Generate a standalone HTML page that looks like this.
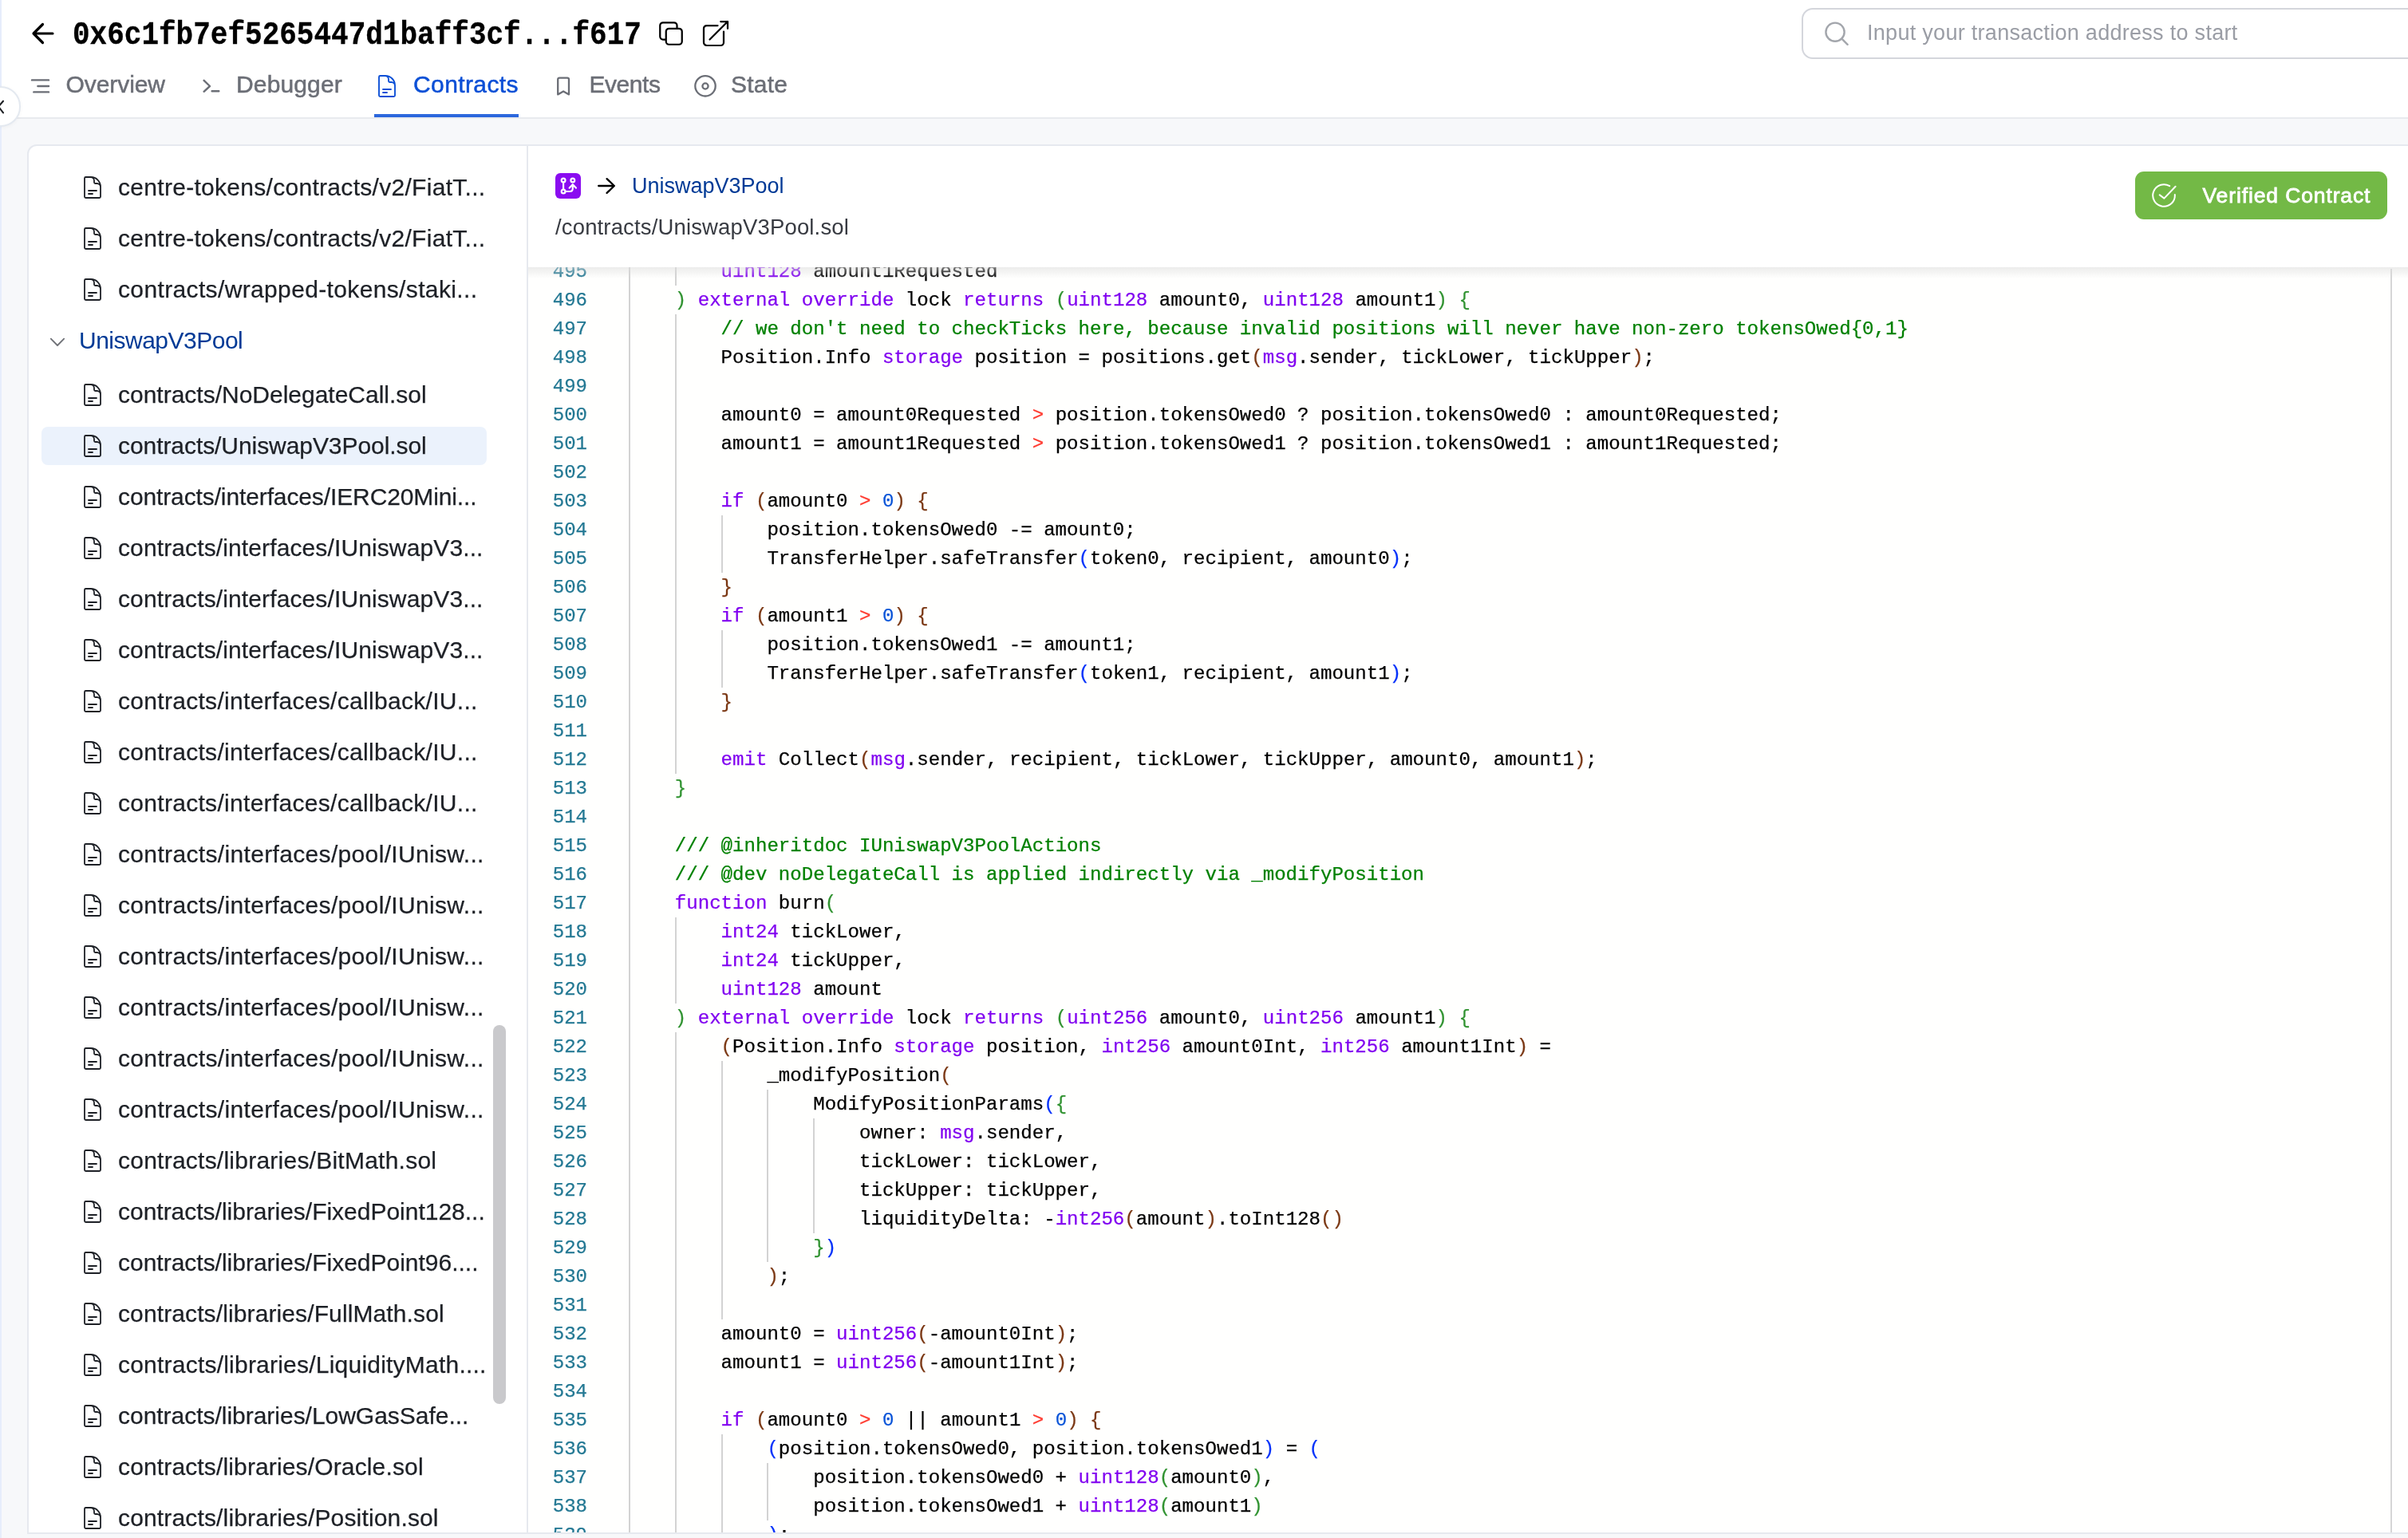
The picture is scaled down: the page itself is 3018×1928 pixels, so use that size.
<!DOCTYPE html>
<html><head><meta charset="utf-8">
<style>
*{box-sizing:border-box;margin:0;padding:0}
html,body{width:3018px;height:1928px;overflow:hidden;background:#f7f8fa;font-family:"Liberation Sans",sans-serif}
svg{position:absolute;overflow:visible}
#hdr{position:absolute;left:0;top:0;width:3018px;height:149px;background:#fff;border-bottom:2px solid #e8eaee}
#lstrip{position:absolute;left:0;top:0;width:2px;height:1928px;background:#e6edfb;z-index:5}
#title{position:absolute;left:91px;top:15.5px;font-family:"Liberation Mono",monospace;font-weight:bold;font-size:36px;line-height:60px;color:#000;white-space:nowrap;transform:scaleY(1.15);transform-origin:0 39.6px;-webkit-text-stroke:0.3px #000}
.tab{position:absolute;top:88px;font-size:30px;line-height:36px;color:#6b6e76;white-space:nowrap;-webkit-text-stroke:0.5px currentColor}
.tab.act{color:#0b4fd6}
#uline{position:absolute;left:469px;top:143px;width:181px;height:4px;background:#2b67dc}
#search{position:absolute;left:2258px;top:10px;width:900px;height:64px;border:2px solid #d4d6dc;border-radius:14px;background:#fff}
#stext{position:absolute;left:2340px;top:23px;font-size:27px;letter-spacing:0.29px;line-height:36px;color:#9a9da5;white-space:nowrap}
#colbtn{position:absolute;left:-24.5px;top:108px;width:50.5px;height:50.5px;border-radius:50%;background:#fff;border:2px solid #e4e9f0;box-shadow:0 1px 5px rgba(0,0,0,0.04);z-index:6}
#card{position:absolute;left:34px;top:181px;width:2994px;height:1742px;background:#fff;border:2px solid #e6e9ef;border-radius:12px 12px 0 0}
#divider{position:absolute;left:660px;top:183px;width:2px;height:1738px;background:#e6e9ef}
.ficon{left:100.3px}
.fi{position:absolute;left:148px;font-size:30px;line-height:40px;color:#1d2026;white-space:nowrap;-webkit-text-stroke:0.25px #1d2026}
#sel{position:absolute;left:52px;top:535px;width:558px;height:48px;background:#ebf2fc;border-radius:8px}
#sbar{position:absolute;left:618px;top:1285px;width:16px;height:475px;background:#c9c9cc;border-radius:8px}
#chead{position:absolute;left:662px;top:183px;width:2400px;height:152px;background:#fff}
#ed{will-change:transform;position:absolute;left:662px;top:335px;width:2357px;height:1586px;background:#fffffe;overflow:hidden}
#shadow{position:absolute;left:662px;top:335px;width:2357px;height:14px;background:linear-gradient(#dcdcdc,rgba(220,220,220,0));z-index:3;opacity:.55}
#ruler{position:absolute;left:2996px;top:337px;width:2px;height:1584px;background:#d6d6d6}
.ln{position:absolute;left:0;width:74px;text-align:right;font-family:"Liberation Mono",monospace;font-size:24px;line-height:36px;color:#237893;-webkit-text-stroke:0.25px #237893}
.cl{position:absolute;left:126px;font-family:"Liberation Mono",monospace;font-size:24.08px;line-height:36px;color:#000;white-space:pre;-webkit-text-stroke:0.25px currentColor}
.g{position:absolute;width:2px;background:#d3d3d3}
.k{color:#8000f0}.c{color:#008000}.o{color:#ff3b30}.n{color:#0b55d8}
.b1{color:#0431fa}.b2{color:#319331}.b3{color:#7b3814}
#folder{position:absolute;left:99px;top:407px;font-size:30px;line-height:40px;color:#003a96;white-space:nowrap;letter-spacing:-0.5px}
#ctitle{position:absolute;left:792px;top:216px;font-size:27px;letter-spacing:0px;line-height:34px;color:#003a96;white-space:nowrap}
#cpath{position:absolute;left:696px;top:268px;font-size:27.5px;line-height:34px;color:#383b42;white-space:nowrap;letter-spacing:0.15px}
#badge{position:absolute;left:2676px;top:215px;width:316px;height:60px;background:#73b946;border-radius:11px}
#btext{position:absolute;left:2760.5px;top:227.5px;letter-spacing:0.88px;font-size:26.5px;line-height:34px;font-weight:normal;-webkit-text-stroke:0.8px #fff;color:#fff;white-space:nowrap}
#root{position:absolute;left:0;top:0;width:3018px;height:1928px;overflow:hidden;will-change:transform;background:#f7f8fa}
</style></head><body><div id="root">
<div id="lstrip"></div>
<div id="hdr"></div>
<div id="colbtn"></div>
<svg style="left:-6px;top:124px;z-index:7" width="14" height="20" viewBox="0 0 14 20"><path d="M10 2.7 L4 9.6 L10 17.3" fill="none" stroke="#1f2125" stroke-width="2.1" stroke-linecap="round" stroke-linejoin="round"/></svg>
<!-- back arrow -->
<svg style="left:38px;top:27px" width="32" height="30" viewBox="0 0 32 30"><path d="M4 15H28M15.5 3.5L4 15L15.5 26.5" fill="none" stroke="#000" stroke-width="3.2" stroke-linecap="round" stroke-linejoin="round"/></svg>
<div id="title">0x6c1fb7ef5265447d1baff3cf...f617</div>
<!-- copy icon -->
<svg style="left:821.3px;top:22px" width="40" height="40" viewBox="0 0 24 24" fill="none" stroke="#000" stroke-width="1.35" stroke-linecap="round" stroke-linejoin="round"><path d="M16.5 8.25V6a2.25 2.25 0 0 0-2.25-2.25H6A2.25 2.25 0 0 0 3.75 6v8.25A2.25 2.25 0 0 0 6 16.5h2.25m8.25-8.25H18a2.25 2.25 0 0 1 2.25 2.25V18A2.25 2.25 0 0 1 18 20.25h-7.5A2.25 2.25 0 0 1 8.25 18v-1.5m8.25-8.25h-6a2.25 2.25 0 0 0-2.25 2.25v6"/></svg>
<!-- external icon -->
<svg style="left:877.3px;top:22.3px" width="40" height="40" viewBox="0 0 24 24" fill="none" stroke="#000" stroke-width="1.35" stroke-linecap="round" stroke-linejoin="round"><path d="M13.5 6H5.25A2.25 2.25 0 0 0 3 8.25v10.5A2.25 2.25 0 0 0 5.25 21h10.5A2.25 2.25 0 0 0 18 18.75V10.5m-10.5 6L21 3m0 0h-5.25M21 3v5.25"/></svg>
<!-- tabs -->
<svg style="left:36px;top:96px" width="28" height="24" viewBox="0 0 28 24" fill="none" stroke="#6b6e76" stroke-width="2.4" stroke-linecap="round"><path d="M4 4.4H25M11.4 12H25M6.3 19.4H25"/></svg>
<div class="tab" style="left:82.5px;letter-spacing:-0.07px">Overview</div>
<svg style="left:252px;top:98px" width="26" height="20" viewBox="0 0 26 20" fill="none" stroke="#6b6e76" stroke-width="2.4" stroke-linecap="round" stroke-linejoin="round"><path d="M3.6 2.8L11 10L3.6 16.8M13.6 16.3H22.3"/></svg>
<div class="tab" style="left:296px;letter-spacing:0.14px">Debugger</div>
<svg style="left:469px;top:92px" width="32" height="32" viewBox="0 0 24 24" fill="none" stroke="#0b4fd6" stroke-width="1.4" stroke-linecap="round" stroke-linejoin="round"><path d="M19.5 14.25v-2.625a3.375 3.375 0 0 0-3.375-3.375h-1.5A1.125 1.125 0 0 1 13.5 7.125v-1.5a3.375 3.375 0 0 0-3.375-3.375H8.25m0 12.75h7.5m-7.5 3H12M10.5 2.25H5.625c-.621 0-1.125.504-1.125 1.125v17.25c0 .621.504 1.125 1.125 1.125h12.75c.621 0 1.125-.504 1.125-1.125V11.25a9 9 0 0 0-9-9Z"/></svg>
<div class="tab act" style="left:518px;letter-spacing:0.4px">Contracts</div>
<svg style="left:696px;top:95px" width="20" height="26" viewBox="0 0 20 26" fill="none" stroke="#6b6e76" stroke-width="2.3" stroke-linejoin="round" stroke-linecap="round"><path d="M3.2 23.4V4.6Q3.2 2.6 5.2 2.6H15Q17 2.6 17 4.6V23.4L10.1 19.5Z"/></svg>
<div class="tab" style="left:738.5px;letter-spacing:-0.46px">Events</div>
<svg style="left:868px;top:92px" width="32" height="32" viewBox="0 0 32 32" fill="none" stroke="#6b6e76" stroke-width="2.3"><circle cx="16" cy="15.8" r="12.7"/><circle cx="16" cy="16" r="3.6"/></svg>
<div class="tab" style="left:916px;letter-spacing:0.25px">State</div>
<div id="uline"></div>
<div id="search"></div>
<svg style="left:2286px;top:26px" width="32" height="32" viewBox="0 0 32 32" fill="none" stroke="#a3a6ac" stroke-width="2.4" stroke-linecap="round"><circle cx="14" cy="14.2" r="11.6"/><path d="M22.4 22.6L29.6 29.8"/></svg>
<div id="stext">Input your transaction address to start</div>

<div id="card"></div>
<div id="divider"></div>
<div id="sel"></div>
<div id="sbar"></div>
<svg style="left:60px;top:420px" width="24" height="16" viewBox="0 0 24 16" fill="none" stroke="#6f7177" stroke-width="1.8" stroke-linecap="round" stroke-linejoin="round"><path d="M3.8 4.6L12 13L20.2 4.6"/></svg>
<div id="folder">UniswapV3Pool</div>
<div class="fi" style="top:215.4px;letter-spacing:0.294px">centre-tokens/contracts/v2/FiatT...</div>
<svg class="ficon" style="top:219.1px" width="32" height="32" viewBox="0 0 24 24" fill="none" stroke="#1d2026" stroke-width="1.35" stroke-linecap="round" stroke-linejoin="round"><path d="M19.5 14.25v-2.625a3.375 3.375 0 0 0-3.375-3.375h-1.5A1.125 1.125 0 0 1 13.5 7.125v-1.5a3.375 3.375 0 0 0-3.375-3.375H8.25m0 12.75h7.5m-7.5 3H12M10.5 2.25H5.625c-.621 0-1.125.504-1.125 1.125v17.25c0 .621.504 1.125 1.125 1.125h12.75c.621 0 1.125-.504 1.125-1.125V11.25a9 9 0 0 0-9-9Z"/></svg>
<div class="fi" style="top:279.4px;letter-spacing:0.294px">centre-tokens/contracts/v2/FiatT...</div>
<svg class="ficon" style="top:283.1px" width="32" height="32" viewBox="0 0 24 24" fill="none" stroke="#1d2026" stroke-width="1.35" stroke-linecap="round" stroke-linejoin="round"><path d="M19.5 14.25v-2.625a3.375 3.375 0 0 0-3.375-3.375h-1.5A1.125 1.125 0 0 1 13.5 7.125v-1.5a3.375 3.375 0 0 0-3.375-3.375H8.25m0 12.75h7.5m-7.5 3H12M10.5 2.25H5.625c-.621 0-1.125.504-1.125 1.125v17.25c0 .621.504 1.125 1.125 1.125h12.75c.621 0 1.125-.504 1.125-1.125V11.25a9 9 0 0 0-9-9Z"/></svg>
<div class="fi" style="top:343.4px;letter-spacing:0.359px">contracts/wrapped-tokens/staki...</div>
<svg class="ficon" style="top:347.1px" width="32" height="32" viewBox="0 0 24 24" fill="none" stroke="#1d2026" stroke-width="1.35" stroke-linecap="round" stroke-linejoin="round"><path d="M19.5 14.25v-2.625a3.375 3.375 0 0 0-3.375-3.375h-1.5A1.125 1.125 0 0 1 13.5 7.125v-1.5a3.375 3.375 0 0 0-3.375-3.375H8.25m0 12.75h7.5m-7.5 3H12M10.5 2.25H5.625c-.621 0-1.125.504-1.125 1.125v17.25c0 .621.504 1.125 1.125 1.125h12.75c.621 0 1.125-.504 1.125-1.125V11.25a9 9 0 0 0-9-9Z"/></svg>
<div class="fi" style="top:475.4px;letter-spacing:-0.008px">contracts/NoDelegateCall.sol</div>
<svg class="ficon" style="top:479.1px" width="32" height="32" viewBox="0 0 24 24" fill="none" stroke="#1d2026" stroke-width="1.35" stroke-linecap="round" stroke-linejoin="round"><path d="M19.5 14.25v-2.625a3.375 3.375 0 0 0-3.375-3.375h-1.5A1.125 1.125 0 0 1 13.5 7.125v-1.5a3.375 3.375 0 0 0-3.375-3.375H8.25m0 12.75h7.5m-7.5 3H12M10.5 2.25H5.625c-.621 0-1.125.504-1.125 1.125v17.25c0 .621.504 1.125 1.125 1.125h12.75c.621 0 1.125-.504 1.125-1.125V11.25a9 9 0 0 0-9-9Z"/></svg>
<div class="fi" style="top:539.4px;letter-spacing:-0.069px">contracts/UniswapV3Pool.sol</div>
<svg class="ficon" style="top:543.1px" width="32" height="32" viewBox="0 0 24 24" fill="none" stroke="#1d2026" stroke-width="1.35" stroke-linecap="round" stroke-linejoin="round"><path d="M19.5 14.25v-2.625a3.375 3.375 0 0 0-3.375-3.375h-1.5A1.125 1.125 0 0 1 13.5 7.125v-1.5a3.375 3.375 0 0 0-3.375-3.375H8.25m0 12.75h7.5m-7.5 3H12M10.5 2.25H5.625c-.621 0-1.125.504-1.125 1.125v17.25c0 .621.504 1.125 1.125 1.125h12.75c.621 0 1.125-.504 1.125-1.125V11.25a9 9 0 0 0-9-9Z"/></svg>
<div class="fi" style="top:603.4px;letter-spacing:-0.118px">contracts/interfaces/IERC20Mini...</div>
<svg class="ficon" style="top:607.1px" width="32" height="32" viewBox="0 0 24 24" fill="none" stroke="#1d2026" stroke-width="1.35" stroke-linecap="round" stroke-linejoin="round"><path d="M19.5 14.25v-2.625a3.375 3.375 0 0 0-3.375-3.375h-1.5A1.125 1.125 0 0 1 13.5 7.125v-1.5a3.375 3.375 0 0 0-3.375-3.375H8.25m0 12.75h7.5m-7.5 3H12M10.5 2.25H5.625c-.621 0-1.125.504-1.125 1.125v17.25c0 .621.504 1.125 1.125 1.125h12.75c.621 0 1.125-.504 1.125-1.125V11.25a9 9 0 0 0-9-9Z"/></svg>
<div class="fi" style="top:667.4px;letter-spacing:0.118px">contracts/interfaces/IUniswapV3...</div>
<svg class="ficon" style="top:671.1px" width="32" height="32" viewBox="0 0 24 24" fill="none" stroke="#1d2026" stroke-width="1.35" stroke-linecap="round" stroke-linejoin="round"><path d="M19.5 14.25v-2.625a3.375 3.375 0 0 0-3.375-3.375h-1.5A1.125 1.125 0 0 1 13.5 7.125v-1.5a3.375 3.375 0 0 0-3.375-3.375H8.25m0 12.75h7.5m-7.5 3H12M10.5 2.25H5.625c-.621 0-1.125.504-1.125 1.125v17.25c0 .621.504 1.125 1.125 1.125h12.75c.621 0 1.125-.504 1.125-1.125V11.25a9 9 0 0 0-9-9Z"/></svg>
<div class="fi" style="top:731.4px;letter-spacing:0.118px">contracts/interfaces/IUniswapV3...</div>
<svg class="ficon" style="top:735.1px" width="32" height="32" viewBox="0 0 24 24" fill="none" stroke="#1d2026" stroke-width="1.35" stroke-linecap="round" stroke-linejoin="round"><path d="M19.5 14.25v-2.625a3.375 3.375 0 0 0-3.375-3.375h-1.5A1.125 1.125 0 0 1 13.5 7.125v-1.5a3.375 3.375 0 0 0-3.375-3.375H8.25m0 12.75h7.5m-7.5 3H12M10.5 2.25H5.625c-.621 0-1.125.504-1.125 1.125v17.25c0 .621.504 1.125 1.125 1.125h12.75c.621 0 1.125-.504 1.125-1.125V11.25a9 9 0 0 0-9-9Z"/></svg>
<div class="fi" style="top:795.4px;letter-spacing:0.118px">contracts/interfaces/IUniswapV3...</div>
<svg class="ficon" style="top:799.1px" width="32" height="32" viewBox="0 0 24 24" fill="none" stroke="#1d2026" stroke-width="1.35" stroke-linecap="round" stroke-linejoin="round"><path d="M19.5 14.25v-2.625a3.375 3.375 0 0 0-3.375-3.375h-1.5A1.125 1.125 0 0 1 13.5 7.125v-1.5a3.375 3.375 0 0 0-3.375-3.375H8.25m0 12.75h7.5m-7.5 3H12M10.5 2.25H5.625c-.621 0-1.125.504-1.125 1.125v17.25c0 .621.504 1.125 1.125 1.125h12.75c.621 0 1.125-.504 1.125-1.125V11.25a9 9 0 0 0-9-9Z"/></svg>
<div class="fi" style="top:859.4px;letter-spacing:0.300px">contracts/interfaces/callback/IU...</div>
<svg class="ficon" style="top:863.1px" width="32" height="32" viewBox="0 0 24 24" fill="none" stroke="#1d2026" stroke-width="1.35" stroke-linecap="round" stroke-linejoin="round"><path d="M19.5 14.25v-2.625a3.375 3.375 0 0 0-3.375-3.375h-1.5A1.125 1.125 0 0 1 13.5 7.125v-1.5a3.375 3.375 0 0 0-3.375-3.375H8.25m0 12.75h7.5m-7.5 3H12M10.5 2.25H5.625c-.621 0-1.125.504-1.125 1.125v17.25c0 .621.504 1.125 1.125 1.125h12.75c.621 0 1.125-.504 1.125-1.125V11.25a9 9 0 0 0-9-9Z"/></svg>
<div class="fi" style="top:923.4px;letter-spacing:0.300px">contracts/interfaces/callback/IU...</div>
<svg class="ficon" style="top:927.1px" width="32" height="32" viewBox="0 0 24 24" fill="none" stroke="#1d2026" stroke-width="1.35" stroke-linecap="round" stroke-linejoin="round"><path d="M19.5 14.25v-2.625a3.375 3.375 0 0 0-3.375-3.375h-1.5A1.125 1.125 0 0 1 13.5 7.125v-1.5a3.375 3.375 0 0 0-3.375-3.375H8.25m0 12.75h7.5m-7.5 3H12M10.5 2.25H5.625c-.621 0-1.125.504-1.125 1.125v17.25c0 .621.504 1.125 1.125 1.125h12.75c.621 0 1.125-.504 1.125-1.125V11.25a9 9 0 0 0-9-9Z"/></svg>
<div class="fi" style="top:987.4px;letter-spacing:0.300px">contracts/interfaces/callback/IU...</div>
<svg class="ficon" style="top:991.1px" width="32" height="32" viewBox="0 0 24 24" fill="none" stroke="#1d2026" stroke-width="1.35" stroke-linecap="round" stroke-linejoin="round"><path d="M19.5 14.25v-2.625a3.375 3.375 0 0 0-3.375-3.375h-1.5A1.125 1.125 0 0 1 13.5 7.125v-1.5a3.375 3.375 0 0 0-3.375-3.375H8.25m0 12.75h7.5m-7.5 3H12M10.5 2.25H5.625c-.621 0-1.125.504-1.125 1.125v17.25c0 .621.504 1.125 1.125 1.125h12.75c.621 0 1.125-.504 1.125-1.125V11.25a9 9 0 0 0-9-9Z"/></svg>
<div class="fi" style="top:1051.4px;letter-spacing:0.339px">contracts/interfaces/pool/IUnisw...</div>
<svg class="ficon" style="top:1055.1px" width="32" height="32" viewBox="0 0 24 24" fill="none" stroke="#1d2026" stroke-width="1.35" stroke-linecap="round" stroke-linejoin="round"><path d="M19.5 14.25v-2.625a3.375 3.375 0 0 0-3.375-3.375h-1.5A1.125 1.125 0 0 1 13.5 7.125v-1.5a3.375 3.375 0 0 0-3.375-3.375H8.25m0 12.75h7.5m-7.5 3H12M10.5 2.25H5.625c-.621 0-1.125.504-1.125 1.125v17.25c0 .621.504 1.125 1.125 1.125h12.75c.621 0 1.125-.504 1.125-1.125V11.25a9 9 0 0 0-9-9Z"/></svg>
<div class="fi" style="top:1115.4px;letter-spacing:0.339px">contracts/interfaces/pool/IUnisw...</div>
<svg class="ficon" style="top:1119.1px" width="32" height="32" viewBox="0 0 24 24" fill="none" stroke="#1d2026" stroke-width="1.35" stroke-linecap="round" stroke-linejoin="round"><path d="M19.5 14.25v-2.625a3.375 3.375 0 0 0-3.375-3.375h-1.5A1.125 1.125 0 0 1 13.5 7.125v-1.5a3.375 3.375 0 0 0-3.375-3.375H8.25m0 12.75h7.5m-7.5 3H12M10.5 2.25H5.625c-.621 0-1.125.504-1.125 1.125v17.25c0 .621.504 1.125 1.125 1.125h12.75c.621 0 1.125-.504 1.125-1.125V11.25a9 9 0 0 0-9-9Z"/></svg>
<div class="fi" style="top:1179.4px;letter-spacing:0.339px">contracts/interfaces/pool/IUnisw...</div>
<svg class="ficon" style="top:1183.1px" width="32" height="32" viewBox="0 0 24 24" fill="none" stroke="#1d2026" stroke-width="1.35" stroke-linecap="round" stroke-linejoin="round"><path d="M19.5 14.25v-2.625a3.375 3.375 0 0 0-3.375-3.375h-1.5A1.125 1.125 0 0 1 13.5 7.125v-1.5a3.375 3.375 0 0 0-3.375-3.375H8.25m0 12.75h7.5m-7.5 3H12M10.5 2.25H5.625c-.621 0-1.125.504-1.125 1.125v17.25c0 .621.504 1.125 1.125 1.125h12.75c.621 0 1.125-.504 1.125-1.125V11.25a9 9 0 0 0-9-9Z"/></svg>
<div class="fi" style="top:1243.4px;letter-spacing:0.339px">contracts/interfaces/pool/IUnisw...</div>
<svg class="ficon" style="top:1247.1px" width="32" height="32" viewBox="0 0 24 24" fill="none" stroke="#1d2026" stroke-width="1.35" stroke-linecap="round" stroke-linejoin="round"><path d="M19.5 14.25v-2.625a3.375 3.375 0 0 0-3.375-3.375h-1.5A1.125 1.125 0 0 1 13.5 7.125v-1.5a3.375 3.375 0 0 0-3.375-3.375H8.25m0 12.75h7.5m-7.5 3H12M10.5 2.25H5.625c-.621 0-1.125.504-1.125 1.125v17.25c0 .621.504 1.125 1.125 1.125h12.75c.621 0 1.125-.504 1.125-1.125V11.25a9 9 0 0 0-9-9Z"/></svg>
<div class="fi" style="top:1307.4px;letter-spacing:0.339px">contracts/interfaces/pool/IUnisw...</div>
<svg class="ficon" style="top:1311.1px" width="32" height="32" viewBox="0 0 24 24" fill="none" stroke="#1d2026" stroke-width="1.35" stroke-linecap="round" stroke-linejoin="round"><path d="M19.5 14.25v-2.625a3.375 3.375 0 0 0-3.375-3.375h-1.5A1.125 1.125 0 0 1 13.5 7.125v-1.5a3.375 3.375 0 0 0-3.375-3.375H8.25m0 12.75h7.5m-7.5 3H12M10.5 2.25H5.625c-.621 0-1.125.504-1.125 1.125v17.25c0 .621.504 1.125 1.125 1.125h12.75c.621 0 1.125-.504 1.125-1.125V11.25a9 9 0 0 0-9-9Z"/></svg>
<div class="fi" style="top:1371.4px;letter-spacing:0.339px">contracts/interfaces/pool/IUnisw...</div>
<svg class="ficon" style="top:1375.1px" width="32" height="32" viewBox="0 0 24 24" fill="none" stroke="#1d2026" stroke-width="1.35" stroke-linecap="round" stroke-linejoin="round"><path d="M19.5 14.25v-2.625a3.375 3.375 0 0 0-3.375-3.375h-1.5A1.125 1.125 0 0 1 13.5 7.125v-1.5a3.375 3.375 0 0 0-3.375-3.375H8.25m0 12.75h7.5m-7.5 3H12M10.5 2.25H5.625c-.621 0-1.125.504-1.125 1.125v17.25c0 .621.504 1.125 1.125 1.125h12.75c.621 0 1.125-.504 1.125-1.125V11.25a9 9 0 0 0-9-9Z"/></svg>
<div class="fi" style="top:1435.4px;letter-spacing:0.239px">contracts/libraries/BitMath.sol</div>
<svg class="ficon" style="top:1439.1px" width="32" height="32" viewBox="0 0 24 24" fill="none" stroke="#1d2026" stroke-width="1.35" stroke-linecap="round" stroke-linejoin="round"><path d="M19.5 14.25v-2.625a3.375 3.375 0 0 0-3.375-3.375h-1.5A1.125 1.125 0 0 1 13.5 7.125v-1.5a3.375 3.375 0 0 0-3.375-3.375H8.25m0 12.75h7.5m-7.5 3H12M10.5 2.25H5.625c-.621 0-1.125.504-1.125 1.125v17.25c0 .621.504 1.125 1.125 1.125h12.75c.621 0 1.125-.504 1.125-1.125V11.25a9 9 0 0 0-9-9Z"/></svg>
<div class="fi" style="top:1499.4px;letter-spacing:-0.014px">contracts/libraries/FixedPoint128...</div>
<svg class="ficon" style="top:1503.1px" width="32" height="32" viewBox="0 0 24 24" fill="none" stroke="#1d2026" stroke-width="1.35" stroke-linecap="round" stroke-linejoin="round"><path d="M19.5 14.25v-2.625a3.375 3.375 0 0 0-3.375-3.375h-1.5A1.125 1.125 0 0 1 13.5 7.125v-1.5a3.375 3.375 0 0 0-3.375-3.375H8.25m0 12.75h7.5m-7.5 3H12M10.5 2.25H5.625c-.621 0-1.125.504-1.125 1.125v17.25c0 .621.504 1.125 1.125 1.125h12.75c.621 0 1.125-.504 1.125-1.125V11.25a9 9 0 0 0-9-9Z"/></svg>
<div class="fi" style="top:1563.4px;letter-spacing:-0.011px">contracts/libraries/FixedPoint96....</div>
<svg class="ficon" style="top:1567.1px" width="32" height="32" viewBox="0 0 24 24" fill="none" stroke="#1d2026" stroke-width="1.35" stroke-linecap="round" stroke-linejoin="round"><path d="M19.5 14.25v-2.625a3.375 3.375 0 0 0-3.375-3.375h-1.5A1.125 1.125 0 0 1 13.5 7.125v-1.5a3.375 3.375 0 0 0-3.375-3.375H8.25m0 12.75h7.5m-7.5 3H12M10.5 2.25H5.625c-.621 0-1.125.504-1.125 1.125v17.25c0 .621.504 1.125 1.125 1.125h12.75c.621 0 1.125-.504 1.125-1.125V11.25a9 9 0 0 0-9-9Z"/></svg>
<div class="fi" style="top:1627.4px;letter-spacing:0.113px">contracts/libraries/FullMath.sol</div>
<svg class="ficon" style="top:1631.1px" width="32" height="32" viewBox="0 0 24 24" fill="none" stroke="#1d2026" stroke-width="1.35" stroke-linecap="round" stroke-linejoin="round"><path d="M19.5 14.25v-2.625a3.375 3.375 0 0 0-3.375-3.375h-1.5A1.125 1.125 0 0 1 13.5 7.125v-1.5a3.375 3.375 0 0 0-3.375-3.375H8.25m0 12.75h7.5m-7.5 3H12M10.5 2.25H5.625c-.621 0-1.125.504-1.125 1.125v17.25c0 .621.504 1.125 1.125 1.125h12.75c.621 0 1.125-.504 1.125-1.125V11.25a9 9 0 0 0-9-9Z"/></svg>
<div class="fi" style="top:1691.4px;letter-spacing:0.219px">contracts/libraries/LiquidityMath....</div>
<svg class="ficon" style="top:1695.1px" width="32" height="32" viewBox="0 0 24 24" fill="none" stroke="#1d2026" stroke-width="1.35" stroke-linecap="round" stroke-linejoin="round"><path d="M19.5 14.25v-2.625a3.375 3.375 0 0 0-3.375-3.375h-1.5A1.125 1.125 0 0 1 13.5 7.125v-1.5a3.375 3.375 0 0 0-3.375-3.375H8.25m0 12.75h7.5m-7.5 3H12M10.5 2.25H5.625c-.621 0-1.125.504-1.125 1.125v17.25c0 .621.504 1.125 1.125 1.125h12.75c.621 0 1.125-.504 1.125-1.125V11.25a9 9 0 0 0-9-9Z"/></svg>
<div class="fi" style="top:1755.4px;letter-spacing:-0.025px">contracts/libraries/LowGasSafe...</div>
<svg class="ficon" style="top:1759.1px" width="32" height="32" viewBox="0 0 24 24" fill="none" stroke="#1d2026" stroke-width="1.35" stroke-linecap="round" stroke-linejoin="round"><path d="M19.5 14.25v-2.625a3.375 3.375 0 0 0-3.375-3.375h-1.5A1.125 1.125 0 0 1 13.5 7.125v-1.5a3.375 3.375 0 0 0-3.375-3.375H8.25m0 12.75h7.5m-7.5 3H12M10.5 2.25H5.625c-.621 0-1.125.504-1.125 1.125v17.25c0 .621.504 1.125 1.125 1.125h12.75c.621 0 1.125-.504 1.125-1.125V11.25a9 9 0 0 0-9-9Z"/></svg>
<div class="fi" style="top:1819.4px;letter-spacing:0.141px">contracts/libraries/Oracle.sol</div>
<svg class="ficon" style="top:1823.1px" width="32" height="32" viewBox="0 0 24 24" fill="none" stroke="#1d2026" stroke-width="1.35" stroke-linecap="round" stroke-linejoin="round"><path d="M19.5 14.25v-2.625a3.375 3.375 0 0 0-3.375-3.375h-1.5A1.125 1.125 0 0 1 13.5 7.125v-1.5a3.375 3.375 0 0 0-3.375-3.375H8.25m0 12.75h7.5m-7.5 3H12M10.5 2.25H5.625c-.621 0-1.125.504-1.125 1.125v17.25c0 .621.504 1.125 1.125 1.125h12.75c.621 0 1.125-.504 1.125-1.125V11.25a9 9 0 0 0-9-9Z"/></svg>
<div class="fi" style="top:1883.4px;letter-spacing:0.152px">contracts/libraries/Position.sol</div>
<svg class="ficon" style="top:1887.1px" width="32" height="32" viewBox="0 0 24 24" fill="none" stroke="#1d2026" stroke-width="1.35" stroke-linecap="round" stroke-linejoin="round"><path d="M19.5 14.25v-2.625a3.375 3.375 0 0 0-3.375-3.375h-1.5A1.125 1.125 0 0 1 13.5 7.125v-1.5a3.375 3.375 0 0 0-3.375-3.375H8.25m0 12.75h7.5m-7.5 3H12M10.5 2.25H5.625c-.621 0-1.125.504-1.125 1.125v17.25c0 .621.504 1.125 1.125 1.125h12.75c.621 0 1.125-.504 1.125-1.125V11.25a9 9 0 0 0-9-9Z"/></svg>
<div id="chead"></div>
<svg style="left:696px;top:217px" width="32" height="32" viewBox="0 0 32 32"><rect x="0" y="0" width="32" height="32" rx="6" fill="#8a0cf0"/><g fill="none" stroke="#fff" stroke-width="2.2" stroke-linecap="round" stroke-linejoin="round"><circle cx="10.1" cy="9" r="2.4"/><circle cx="21.8" cy="9" r="2.4"/><circle cx="10.1" cy="23" r="2.4"/><path d="M10.1 11.4V20.6M12.5 23H18Q21.8 23 21.8 19.2V14.6M17.7 18.6L21.8 14.2L25.9 18.6"/></g></svg>
<svg style="left:746px;top:220px" width="28" height="26" viewBox="0 0 28 26" fill="none" stroke="#000" stroke-width="2.3" stroke-linecap="round" stroke-linejoin="round"><path d="M4.2 13H23.8M14.6 4.1L23.8 13L14.6 21.9"/></svg>
<div id="ctitle">UniswapV3Pool</div>
<div id="cpath">/contracts/UniswapV3Pool.sol</div>
<div id="badge"></div>
<svg style="left:2694px;top:227px" width="36" height="36" viewBox="0 0 36 36" fill="none" stroke="#fff" stroke-width="2" stroke-linecap="round" stroke-linejoin="round"><path d="M31.8 17A13.8 13.8 0 1 1 25.2 6.2"/><path d="M12.7 17.4L18.4 21.6L32.6 6.8"/></svg>
<div id="btext">Verified Contract</div>
<div id="ed">
<div class="ln" style="top:-12px">495</div>
<div class="cl" style="top:-12px">        <span class="k">uint128</span> amount1Requested</div>
<div class="ln" style="top:24px">496</div>
<div class="cl" style="top:24px">    <span class="b2">)</span> <span class="k">external</span> <span class="k">override</span> lock <span class="k">returns</span> <span class="b2">(</span><span class="k">uint128</span> amount0, <span class="k">uint128</span> amount1<span class="b2">)</span> <span class="b2">{</span></div>
<div class="ln" style="top:60px">497</div>
<div class="cl" style="top:60px">        <span class="c">// we don&#x27;t need to checkTicks here, because invalid positions will never have non-zero tokensOwed{0,1}</span></div>
<div class="ln" style="top:96px">498</div>
<div class="cl" style="top:96px">        Position.Info <span class="k">storage</span> position = positions.get<span class="b3">(</span><span class="k">msg</span>.sender, tickLower, tickUpper<span class="b3">)</span>;</div>
<div class="ln" style="top:132px">499</div>
<div class="cl" style="top:132px"></div>
<div class="ln" style="top:168px">500</div>
<div class="cl" style="top:168px">        amount0 = amount0Requested <span class="o">&gt;</span> position.tokensOwed0 ? position.tokensOwed0 : amount0Requested;</div>
<div class="ln" style="top:204px">501</div>
<div class="cl" style="top:204px">        amount1 = amount1Requested <span class="o">&gt;</span> position.tokensOwed1 ? position.tokensOwed1 : amount1Requested;</div>
<div class="ln" style="top:240px">502</div>
<div class="cl" style="top:240px"></div>
<div class="ln" style="top:276px">503</div>
<div class="cl" style="top:276px">        <span class="k">if</span> <span class="b3">(</span>amount0 <span class="o">&gt;</span> <span class="n">0</span><span class="b3">)</span> <span class="b3">{</span></div>
<div class="ln" style="top:312px">504</div>
<div class="cl" style="top:312px">            position.tokensOwed0 -= amount0;</div>
<div class="ln" style="top:348px">505</div>
<div class="cl" style="top:348px">            TransferHelper.safeTransfer<span class="b1">(</span>token0, recipient, amount0<span class="b1">)</span>;</div>
<div class="ln" style="top:384px">506</div>
<div class="cl" style="top:384px">        <span class="b3">}</span></div>
<div class="ln" style="top:420px">507</div>
<div class="cl" style="top:420px">        <span class="k">if</span> <span class="b3">(</span>amount1 <span class="o">&gt;</span> <span class="n">0</span><span class="b3">)</span> <span class="b3">{</span></div>
<div class="ln" style="top:456px">508</div>
<div class="cl" style="top:456px">            position.tokensOwed1 -= amount1;</div>
<div class="ln" style="top:492px">509</div>
<div class="cl" style="top:492px">            TransferHelper.safeTransfer<span class="b1">(</span>token1, recipient, amount1<span class="b1">)</span>;</div>
<div class="ln" style="top:528px">510</div>
<div class="cl" style="top:528px">        <span class="b3">}</span></div>
<div class="ln" style="top:564px">511</div>
<div class="cl" style="top:564px"></div>
<div class="ln" style="top:600px">512</div>
<div class="cl" style="top:600px">        <span class="k">emit</span> Collect<span class="b3">(</span><span class="k">msg</span>.sender, recipient, tickLower, tickUpper, amount0, amount1<span class="b3">)</span>;</div>
<div class="ln" style="top:636px">513</div>
<div class="cl" style="top:636px">    <span class="b2">}</span></div>
<div class="ln" style="top:672px">514</div>
<div class="cl" style="top:672px"></div>
<div class="ln" style="top:708px">515</div>
<div class="cl" style="top:708px">    <span class="c">/// @inheritdoc IUniswapV3PoolActions</span></div>
<div class="ln" style="top:744px">516</div>
<div class="cl" style="top:744px">    <span class="c">/// @dev noDelegateCall is applied indirectly via _modifyPosition</span></div>
<div class="ln" style="top:780px">517</div>
<div class="cl" style="top:780px">    <span class="k">function</span> burn<span class="b2">(</span></div>
<div class="ln" style="top:816px">518</div>
<div class="cl" style="top:816px">        <span class="k">int24</span> tickLower,</div>
<div class="ln" style="top:852px">519</div>
<div class="cl" style="top:852px">        <span class="k">int24</span> tickUpper,</div>
<div class="ln" style="top:888px">520</div>
<div class="cl" style="top:888px">        <span class="k">uint128</span> amount</div>
<div class="ln" style="top:924px">521</div>
<div class="cl" style="top:924px">    <span class="b2">)</span> <span class="k">external</span> <span class="k">override</span> lock <span class="k">returns</span> <span class="b2">(</span><span class="k">uint256</span> amount0, <span class="k">uint256</span> amount1<span class="b2">)</span> <span class="b2">{</span></div>
<div class="ln" style="top:960px">522</div>
<div class="cl" style="top:960px">        <span class="b3">(</span>Position.Info <span class="k">storage</span> position, <span class="k">int256</span> amount0Int, <span class="k">int256</span> amount1Int<span class="b3">)</span> =</div>
<div class="ln" style="top:996px">523</div>
<div class="cl" style="top:996px">            _modifyPosition<span class="b3">(</span></div>
<div class="ln" style="top:1032px">524</div>
<div class="cl" style="top:1032px">                ModifyPositionParams<span class="b1">(</span><span class="b2">{</span></div>
<div class="ln" style="top:1068px">525</div>
<div class="cl" style="top:1068px">                    owner: <span class="k">msg</span>.sender,</div>
<div class="ln" style="top:1104px">526</div>
<div class="cl" style="top:1104px">                    tickLower: tickLower,</div>
<div class="ln" style="top:1140px">527</div>
<div class="cl" style="top:1140px">                    tickUpper: tickUpper,</div>
<div class="ln" style="top:1176px">528</div>
<div class="cl" style="top:1176px">                    liquidityDelta: -<span class="k">int256</span><span class="b3">(</span>amount<span class="b3">)</span>.toInt128<span class="b3">(</span><span class="b3">)</span></div>
<div class="ln" style="top:1212px">529</div>
<div class="cl" style="top:1212px">                <span class="b2">}</span><span class="b1">)</span></div>
<div class="ln" style="top:1248px">530</div>
<div class="cl" style="top:1248px">            <span class="b3">)</span>;</div>
<div class="ln" style="top:1284px">531</div>
<div class="cl" style="top:1284px"></div>
<div class="ln" style="top:1320px">532</div>
<div class="cl" style="top:1320px">        amount0 = <span class="k">uint256</span><span class="b3">(</span>-amount0Int<span class="b3">)</span>;</div>
<div class="ln" style="top:1356px">533</div>
<div class="cl" style="top:1356px">        amount1 = <span class="k">uint256</span><span class="b3">(</span>-amount1Int<span class="b3">)</span>;</div>
<div class="ln" style="top:1392px">534</div>
<div class="cl" style="top:1392px"></div>
<div class="ln" style="top:1428px">535</div>
<div class="cl" style="top:1428px">        <span class="k">if</span> <span class="b3">(</span>amount0 <span class="o">&gt;</span> <span class="n">0</span> || amount1 <span class="o">&gt;</span> <span class="n">0</span><span class="b3">)</span> <span class="b3">{</span></div>
<div class="ln" style="top:1464px">536</div>
<div class="cl" style="top:1464px">            <span class="b1">(</span>position.tokensOwed0, position.tokensOwed1<span class="b1">)</span> = <span class="b1">(</span></div>
<div class="ln" style="top:1500px">537</div>
<div class="cl" style="top:1500px">                position.tokensOwed0 + <span class="k">uint128</span><span class="b2">(</span>amount0<span class="b2">)</span>,</div>
<div class="ln" style="top:1536px">538</div>
<div class="cl" style="top:1536px">                position.tokensOwed1 + <span class="k">uint128</span><span class="b2">(</span>amount1<span class="b2">)</span></div>
<div class="ln" style="top:1572px">539</div>
<div class="cl" style="top:1572px">            <span class="b1">)</span>;</div>
<div class="g" style="left:126.0px;top:-13.5px;height:1620px"></div>
<div class="g" style="left:183.8px;top:-13.5px;height:36px"></div>
<div class="g" style="left:183.8px;top:58.5px;height:576px"></div>
<div class="g" style="left:183.8px;top:814.5px;height:108px"></div>
<div class="g" style="left:183.8px;top:958.5px;height:648px"></div>
<div class="g" style="left:241.6px;top:310.5px;height:72px"></div>
<div class="g" style="left:241.6px;top:454.5px;height:72px"></div>
<div class="g" style="left:241.6px;top:994.5px;height:324px"></div>
<div class="g" style="left:241.6px;top:1462.5px;height:144px"></div>
<div class="g" style="left:299.4px;top:1030.5px;height:216px"></div>
<div class="g" style="left:299.4px;top:1498.5px;height:72px"></div>
<div class="g" style="left:357.2px;top:1066.5px;height:144px"></div>
</div>
<div id="shadow"></div>
<div id="ruler"></div>
</div></body></html>
